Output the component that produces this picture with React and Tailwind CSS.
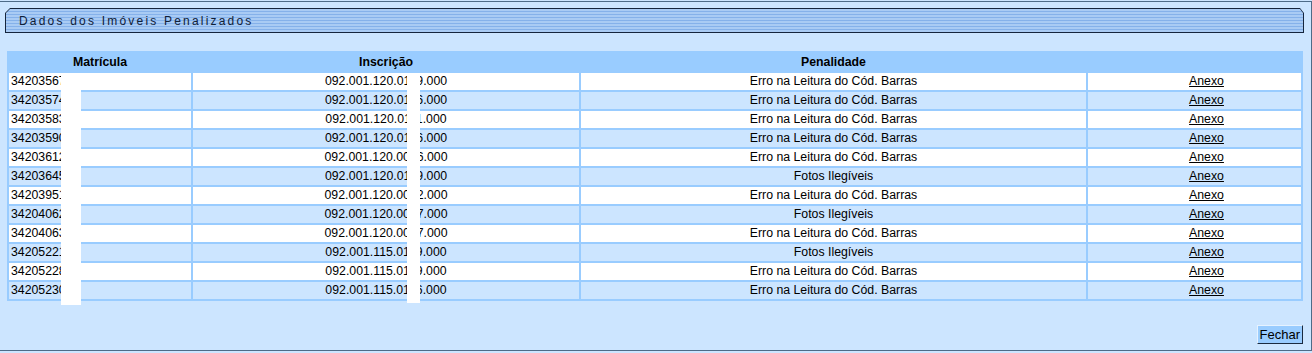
import React from "react";

const rows = [
  ["34203567", "092.001.120.0119.000", "Erro na Leitura do Cód. Barras"],
  ["34203574", "092.001.120.0116.000", "Erro na Leitura do Cód. Barras"],
  ["34203583", "092.001.120.0111.000", "Erro na Leitura do Cód. Barras"],
  ["34203590", "092.001.120.0116.000", "Erro na Leitura do Cód. Barras"],
  ["34203612", "092.001.120.0016.000", "Erro na Leitura do Cód. Barras"],
  ["34203645", "092.001.120.0119.000", "Fotos Ilegíveis"],
  ["34203951", "092.001.120.0012.000", "Erro na Leitura do Cód. Barras"],
  ["34204062", "092.001.120.0017.000", "Fotos Ilegíveis"],
  ["34204063", "092.001.120.0017.000", "Erro na Leitura do Cód. Barras"],
  ["34205221", "092.001.115.0119.000", "Fotos Ilegíveis"],
  ["34205228", "092.001.115.0119.000", "Erro na Leitura do Cód. Barras"],
  ["34205230", "092.001.115.0116.000", "Erro na Leitura do Cód. Barras"],
];

export default function App() {
  return (
    <div className="w-[1312px] h-[353px] bg-[#cce5ff] pt-px font-['Liberation_Sans',Arial,sans-serif] text-[12.3px] text-black">
      <div className="relative h-[350px] border-t border-r border-b border-[#4d6b88] pl-[5px] pr-[7px] pt-[6px]">
        {/* title bar */}
        <div className="h-[25px] bg-[#15253d] p-px [clip-path:polygon(5px_0,calc(100%-4px)_0,100%_5px,100%_100%,0_100%,0_5px)]">
          <div className="h-full flex items-center pl-[13px] bg-[repeating-linear-gradient(to_bottom,#a9cbf4_0px,#a9cbf4_2px,#85b1ea_2px,#85b1ea_3px)] [clip-path:polygon(4px_0,calc(100%-3px)_0,100%_4px,100%_100%,0_100%,0_4px)]">
            <span className="text-[12px] tracking-[2.2px] text-[#0f2038] leading-none">Dados dos Imóveis Penalizados</span>
          </div>
        </div>

        {/* table */}
        <table className="mt-[18px] ml-[2px] w-[1296px] table-fixed border-separate border-spacing-[2px] bg-[#99ccff]">
          <colgroup>
            <col className="w-[182px]" />
            <col className="w-[386px]" />
            <col className="w-[505px]" />
            <col className="w-[213px]" />
          </colgroup>
          <thead>
            <tr>
              <th className="h-[18px] p-0 font-bold text-center leading-[18px]">Matrícula</th>
              <th className="h-[18px] p-0 font-bold text-center leading-[18px]">Inscrição</th>
              <th className="h-[18px] p-0 font-bold text-center leading-[18px]">Penalidade</th>
              <th className="h-[18px] p-0"></th>
            </tr>
          </thead>
          <tbody>
            {rows.map((r, i) => {
              const bg = i % 2 === 0 ? "bg-white" : "bg-[#cce5ff]";
              return (
                <tr key={i}>
                  <td className={`${bg} h-[17px] p-0 pl-[2px] leading-[17px] text-left whitespace-nowrap overflow-hidden`}>{r[0]}</td>
                  <td className={`${bg} h-[17px] p-0 leading-[17px] text-center whitespace-nowrap`}>{r[1]}</td>
                  <td className={`${bg} h-[17px] p-0 leading-[17px] text-center whitespace-nowrap`}>{r[2]}</td>
                  <td className={`${bg} h-[17px] p-0 pl-[24px] leading-[17px] text-center`}>
                    <a href="#" className="underline text-black">Anexo</a>
                  </td>
                </tr>
              );
            })}
          </tbody>
        </table>

        {/* button */}
        <div className="flex justify-end mt-[24px] pr-px">
          <button className="h-[19px] px-[2px] bg-[#99ccff] text-[13px] leading-none text-black border border-t-[#e6f2ff] border-l-[#e6f2ff] border-r-[#1a2a40] border-b-[#1a2a40]">
            Fechar
          </button>
        </div>

        {/* masked areas */}
        <div className="absolute left-[61px] top-[71px] w-[20px] h-[232px] bg-white"></div>
        <div className="absolute left-[407px] top-[71px] w-[13px] h-[230px] bg-white"></div>
      </div>
    </div>
  );
}
